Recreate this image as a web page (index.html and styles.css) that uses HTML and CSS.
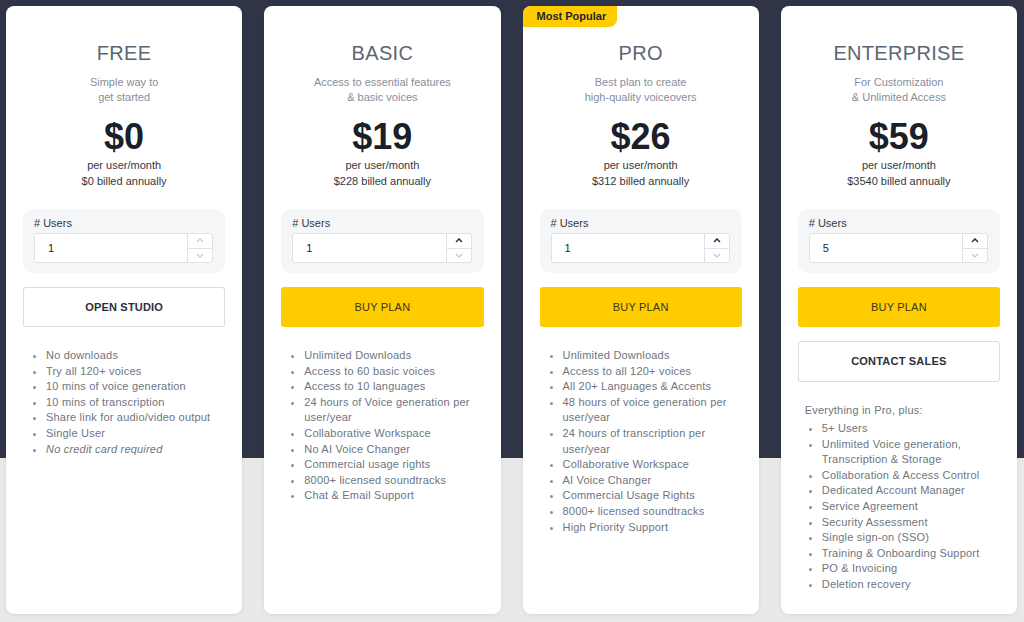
FILE: index.html
```html
<!DOCTYPE html>
<html lang="en">
<head>
<meta charset="utf-8">
<title>Pricing</title>
<link rel="stylesheet" href="styles.css">
</head>
<body>
<div class="page">
  <div class="cards">
    <div class="card">
      <h2 class="plan">FREE</h2>
      <p class="sub">Simple way to<br>get started</p>
      <div class="price">$0</div>
      <p class="per">per user/month<br>$0 billed annually</p>
      <div class="users">
        <div class="users-label"># Users</div>
        <div class="num">
          <span class="num-val">1</span>
          <span class="spin">
            <span class="arr"><svg width="8" height="5" viewBox="0 0 8 5"><path d="M1 4L4 1L7 4" fill="none" stroke="#c4c8ce" stroke-width="1.2"/></svg></span>
            <span class="arr"><svg width="8" height="5" viewBox="0 0 8 5"><path d="M1 1L4 4L7 1" fill="none" stroke="#c4c8ce" stroke-width="1.2"/></svg></span>
          </span>
        </div>
      </div>
      <div class="btn btn-outline">OPEN STUDIO</div>
      <div class="features">
        <ul class="list">
          <li>No downloads</li>
          <li>Try all 120+ voices</li>
          <li>10 mins of voice generation</li>
          <li>10 mins of transcription</li>
          <li>Share link for audio/video output</li>
          <li>Single User</li>
          <li><em>No credit card required</em></li>
        </ul>
      </div>
    </div>

    <div class="card">
      <h2 class="plan">BASIC</h2>
      <p class="sub">Access to essential features<br>&amp; basic voices</p>
      <div class="price">$19</div>
      <p class="per">per user/month<br>$228 billed annually</p>
      <div class="users">
        <div class="users-label"># Users</div>
        <div class="num">
          <span class="num-val">1</span>
          <span class="spin">
            <span class="arr"><svg width="8" height="5" viewBox="0 0 8 5"><path d="M1 4L4 1L7 4" fill="none" stroke="#2b3140" stroke-width="1.5"/></svg></span>
            <span class="arr"><svg width="8" height="5" viewBox="0 0 8 5"><path d="M1 1L4 4L7 1" fill="none" stroke="#c4c8ce" stroke-width="1.2"/></svg></span>
          </span>
        </div>
      </div>
      <div class="btn btn-yellow">BUY PLAN</div>
      <div class="features">
        <ul class="list">
          <li>Unlimited Downloads</li>
          <li>Access to 60 basic voices</li>
          <li>Access to 10 languages</li>
          <li>24 hours of Voice generation per user/year</li>
          <li>Collaborative Workspace</li>
          <li>No AI Voice Changer</li>
          <li>Commercial usage rights</li>
          <li>8000+ licensed soundtracks</li>
          <li>Chat &amp; Email Support</li>
        </ul>
      </div>
    </div>

    <div class="card">
      <div class="badge">Most Popular</div>
      <h2 class="plan">PRO</h2>
      <p class="sub">Best plan to create<br>high-quality voiceovers</p>
      <div class="price">$26</div>
      <p class="per">per user/month<br>$312 billed annually</p>
      <div class="users">
        <div class="users-label"># Users</div>
        <div class="num">
          <span class="num-val">1</span>
          <span class="spin">
            <span class="arr"><svg width="8" height="5" viewBox="0 0 8 5"><path d="M1 4L4 1L7 4" fill="none" stroke="#2b3140" stroke-width="1.5"/></svg></span>
            <span class="arr"><svg width="8" height="5" viewBox="0 0 8 5"><path d="M1 1L4 4L7 1" fill="none" stroke="#c4c8ce" stroke-width="1.2"/></svg></span>
          </span>
        </div>
      </div>
      <div class="btn btn-yellow">BUY PLAN</div>
      <div class="features">
        <ul class="list">
          <li>Unlimited Downloads</li>
          <li>Access to all 120+ voices</li>
          <li>All 20+ Languages &amp; Accents</li>
          <li>48 hours of voice generation per user/year</li>
          <li>24 hours of transcription per user/year</li>
          <li>Collaborative Workspace</li>
          <li>AI Voice Changer</li>
          <li>Commercial Usage Rights</li>
          <li>8000+ licensed soundtracks</li>
          <li>High Priority Support</li>
        </ul>
      </div>
    </div>

    <div class="card">
      <h2 class="plan">ENTERPRISE</h2>
      <p class="sub">For Customization<br>&amp; Unlimited Access</p>
      <div class="price">$59</div>
      <p class="per">per user/month<br>$3540 billed annually</p>
      <div class="users">
        <div class="users-label"># Users</div>
        <div class="num">
          <span class="num-val">5</span>
          <span class="spin">
            <span class="arr"><svg width="8" height="5" viewBox="0 0 8 5"><path d="M1 4L4 1L7 4" fill="none" stroke="#2b3140" stroke-width="1.5"/></svg></span>
            <span class="arr"><svg width="8" height="5" viewBox="0 0 8 5"><path d="M1 1L4 4L7 1" fill="none" stroke="#c4c8ce" stroke-width="1.2"/></svg></span>
          </span>
        </div>
      </div>
      <div class="btn btn-yellow">BUY PLAN</div>
      <div class="btn btn-outline btn-contact">CONTACT SALES</div>
      <div class="features features-ent">
        <p class="intro">Everything in Pro, plus:</p>
        <ul class="list">
          <li>5+ Users</li>
          <li>Unlimited Voice generation, Transcription &amp; Storage</li>
          <li>Collaboration &amp; Access Control</li>
          <li>Dedicated Account Manager</li>
          <li>Service Agreement</li>
          <li>Security Assessment</li>
          <li>Single sign-on (SSO)</li>
          <li>Training &amp; Onboarding Support</li>
          <li>PO &amp; Invoicing</li>
          <li>Deletion recovery</li>
        </ul>
      </div>
    </div>
  </div>
</div>
</body>
</html>
```

FILE: styles.css
```css
* { box-sizing: border-box; }
html, body { margin: 0; padding: 0; }
body {
  font-family: "Liberation Sans", Arial, sans-serif;
  width: 1024px;
  height: 622px;
  overflow: hidden;
}
.page {
  height: 622px;
  background: linear-gradient(to bottom, #2f3547 0, #2f3547 458px, #e9e9ea 458px, #e9e9ea 100%);
}
.cards {
  display: flex;
  gap: 22px;
  padding: 6px 7px 0 6px;
}
.card {
  position: relative;
  flex: 1;
  height: 608px;
  background: #fff;
  border-radius: 8px;
  padding: 35px 17px 0;
  box-shadow: 0 1px 4px rgba(0,0,0,0.08);
  text-align: center;
}
.badge {
  position: absolute;
  top: 0;
  left: 0;
  background: #ffcc00;
  color: #1f2430;
  font-weight: 700;
  font-size: 11px;
  line-height: 21px;
  padding: 0 11px 0 14px;
  border-radius: 8px 0 8px 0;
}
.plan {
  margin: 0;
  font-weight: 400;
  font-size: 20px;
  line-height: 24px;
  color: #5b6675;
  letter-spacing: 0.3px;
}
.sub {
  margin: 10px 0 0;
  font-size: 11px;
  line-height: 15px;
  color: #878e99;
}
.price {
  margin-top: 12px;
  font-size: 36px;
  line-height: 40px;
  font-weight: 700;
  color: #1b1f28;
}
.per {
  margin: 0;
  font-size: 11px;
  line-height: 16px;
  color: #333842;
}
.users {
  margin-top: 20px;
  background: #f5f6f8;
  border-radius: 10px;
  padding: 7px 12px 10px 11px;
  text-align: left;
}
.users-label {
  font-size: 11px;
  line-height: 14px;
  color: #333842;
  margin-bottom: 3px;
}
.num {
  display: flex;
  height: 30px;
  background: #fff;
  border: 1px solid #dfe2e7;
  border-radius: 3px;
}
.num-val {
  flex: 1;
  font-size: 11px;
  line-height: 28px;
  padding-left: 13px;
  color: #1f2430;
}
.spin {
  width: 25px;
  display: flex;
  flex-direction: column;
  border-left: 1px solid #dfe2e7;
}
.arr {
  flex: 1;
  display: flex;
  align-items: center;
  justify-content: center;
}
.arr + .arr { border-top: 1px solid #dfe2e7; }
.btn {
  margin-top: 14px;
  height: 40px;
  border-radius: 3px;
  font-size: 11px;
  font-weight: 700;
  line-height: 40px;
  text-align: center;
  color: #2b303a;
  letter-spacing: 0.2px;
}
.btn-outline {
  border: 1px solid #d9dce1;
  line-height: 38px;
}
.btn-yellow {
  background: #ffcc00;
  font-weight: 400;
  color: #3a3520;
}
.btn-contact { height: 41px; line-height: 39px; }
.features {
  margin-top: 21px;
  text-align: left;
  padding-left: 6px;
}
.features-ent { margin-top: 21px; padding-left: 7px; }
.intro {
  margin: 0 0 3px;
  font-size: 11px;
  line-height: 15px;
  color: #6e7580;
  letter-spacing: 0.2px;
}
.list {
  margin: 0;
  padding-left: 17px;
  font-size: 11px;
  line-height: 15.6px;
  color: #6e7580;
  letter-spacing: 0.2px;
}
.list li::marker { color: #8a909a; }
```
